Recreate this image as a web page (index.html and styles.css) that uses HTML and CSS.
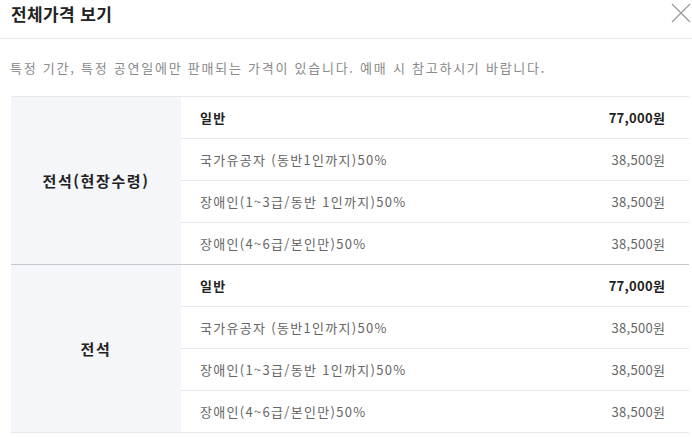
FILE: index.html
```html
<!DOCTYPE html>
<html lang="ko">
<head>
<meta charset="utf-8">
<link rel="stylesheet" href="styles.css">
</head>
<body>
<div class="modal">
  <div class="header">
    <h1 class="title">전체가격 보기</h1>
    <button class="close" aria-label="닫기">
      <svg width="20" height="20" viewBox="0 0 20 20"><path d="M1 1L19 19M19 1L1 19" stroke="#9a9a9a" stroke-width="1.2" fill="none"/></svg>
    </button>
  </div>
  <p class="notice">특정 기간, 특정 공연일에만 판매되는 가격이 있습니다. 예매 시 참고하시기 바랍니다.</p>
  <div class="table">
    <div class="group">
      <div class="seat">전석(현장수령)</div>
      <div class="rows">
        <div class="row main"><span class="label">일반</span><span class="price">77,000원</span></div>
        <div class="row"><span class="label">국가유공자 (동반1인까지)50%</span><span class="price">38,500원</span></div>
        <div class="row"><span class="label">장애인(1~3급/동반 1인까지)50%</span><span class="price">38,500원</span></div>
        <div class="row"><span class="label">장애인(4~6급/본인만)50%</span><span class="price">38,500원</span></div>
      </div>
    </div>
    <div class="group">
      <div class="seat">전석</div>
      <div class="rows">
        <div class="row main"><span class="label">일반</span><span class="price">77,000원</span></div>
        <div class="row"><span class="label">국가유공자 (동반1인까지)50%</span><span class="price">38,500원</span></div>
        <div class="row"><span class="label">장애인(1~3급/동반 1인까지)50%</span><span class="price">38,500원</span></div>
        <div class="row"><span class="label">장애인(4~6급/본인만)50%</span><span class="price">38,500원</span></div>
      </div>
    </div>
  </div>
</div>
</body>
</html>
```
FILE: styles.css
```css
* { box-sizing: border-box; }
html, body { margin: 0; padding: 0; background: #fff; }
body { font-family: "Noto Sans CJK KR", "Noto Sans", sans-serif; color: #222; overflow: hidden; }
.modal { width: 692px; }
.header {
  display: flex; justify-content: space-between; align-items: flex-start;
  height: 39px; border-bottom: 1px solid #e6e8ec; padding-left: 11px;
}
.title { margin: 0; font-size: 17px; font-weight: 700; line-height: 27px; color: #222; letter-spacing: 0.4px; }
.close { border: 0; background: none; padding: 0; margin: 3px 1px 0 0; width: 20px; height: 20px; cursor: pointer; }
.close svg { display: block; }
.notice { margin: 0; padding: 19px 0 0 10px; height: 57px; font-size: 13px; line-height: 20px; color: #8a8a8a; letter-spacing: 1.75px; }
.table { margin: 0 3px 0 11px; border-top: 1px solid #e6e8ec; }
.group { display: flex; border-bottom: 1px solid #c6c8ce; }
.group:last-child { border-bottom-color: #e6e8ec; }
.seat {
  width: 170px; background: #f5f6fa; display: flex; align-items: center; justify-content: center;
  font-size: 15px; font-weight: 700; color: #222; letter-spacing: 1.6px;
}
.rows { flex: 1; }
.row {
  display: flex; justify-content: space-between; align-items: center;
  height: 42px; padding: 0 24px 0 19px; font-size: 13px; color: #666;
  border-bottom: 1px solid #e6e8ec;
}
.row:last-child { border-bottom: 0; height: 41px; }
.label { letter-spacing: 1.3px; }
.price { letter-spacing: 0.3px; margin-right: -0.3px; }
.row.main { color: #222; font-weight: 700; }
```
